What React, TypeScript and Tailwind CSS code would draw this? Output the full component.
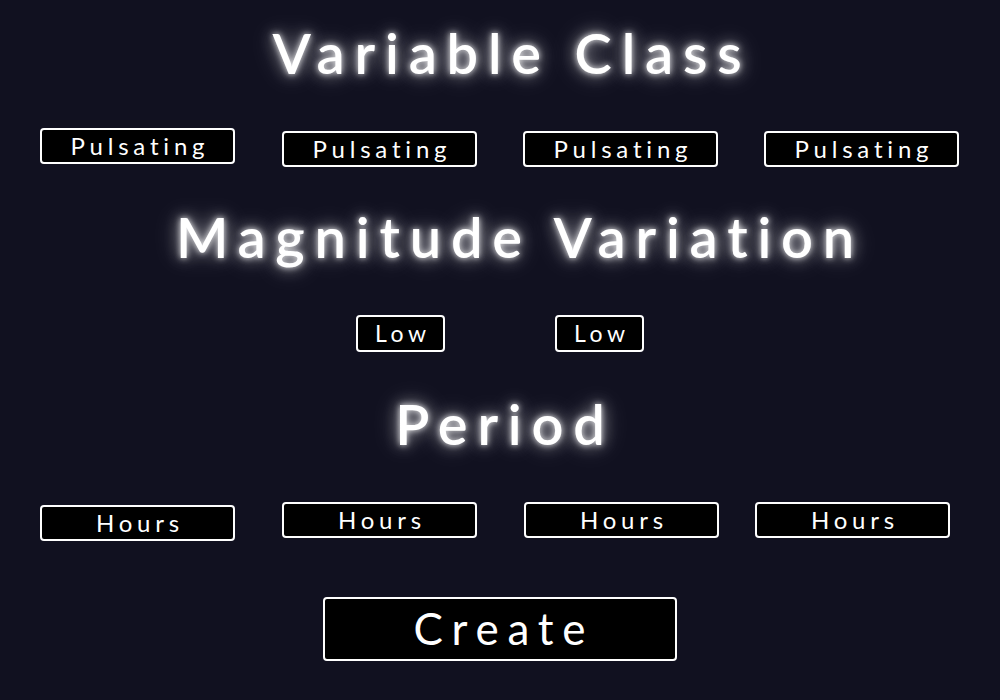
import React from 'react';

const glow = '[text-shadow:0_0_6px_rgba(255,255,255,0.9),0_0_16px_rgba(255,255,255,0.6),0_0_28px_rgba(255,255,255,0.35)]';

const Heading: React.FC<{ text: string; className?: string }> = ({ text, className = '' }) => (
  <h1
    className={`h-[56px] text-center text-[56px] leading-[56px] font-semibold tracking-[0.175em] text-white ${glow} ${className}`}
  >
    {text}
  </h1>
);

const Choice: React.FC<{ label: string; className?: string }> = ({ label, className = '' }) => (
  <button
    className={`flex items-center justify-center rounded-[4px] border-2 border-white bg-black pl-[0.2em] pb-[1px] leading-none text-white tracking-[0.2em] ${className}`}
  >
    {label}
  </button>
);

export default function App() {
  return (
    <div className="flex h-[700px] w-[1000px] flex-col bg-[#111120] font-['Lato',sans-serif]">
      <Heading text="Variable Class" className="mt-[25px] pl-[24px]" />

      <div className="mt-[47px] flex items-start pl-[40px]">
        <Choice label="Pulsating" className="h-[36px] w-[195px] text-[24px]" />
        <Choice label="Pulsating" className="ml-[47px] mt-[3px] h-[36px] w-[195px] text-[24px]" />
        <Choice label="Pulsating" className="ml-[46px] mt-[3px] h-[36px] w-[195px] text-[24px]" />
        <Choice label="Pulsating" className="ml-[46px] mt-[3px] h-[36px] w-[195px] text-[24px]" />
      </div>

      <Heading text="Magnitude Variation" className="mt-[42px] pl-[40px]" />

      <div className="mt-[50px] flex items-start pl-[356px]">
        <Choice label="Low" className="h-[37px] w-[89px] text-[23px]" />
        <Choice label="Low" className="ml-[110px] h-[37px] w-[89px] text-[23px]" />
      </div>

      <Heading text="Period" className="mt-[44px] pl-[10px]" />

      <div className="mt-[50px] flex items-start pl-[40px]">
        <Choice label="Hours" className="mt-[3px] h-[36px] w-[195px] text-[24px]" />
        <Choice label="Hours" className="ml-[47px] h-[36px] w-[195px] text-[24px]" />
        <Choice label="Hours" className="ml-[47px] h-[36px] w-[195px] text-[24px]" />
        <Choice label="Hours" className="ml-[36px] h-[36px] w-[195px] text-[24px]" />
      </div>

      <div className="mt-[56px] flex justify-center">
        <Choice label="Create" className="ml-[-1px] h-[64px] w-[354px] pb-[3px] text-[44px]" />
      </div>
    </div>
  );
}
